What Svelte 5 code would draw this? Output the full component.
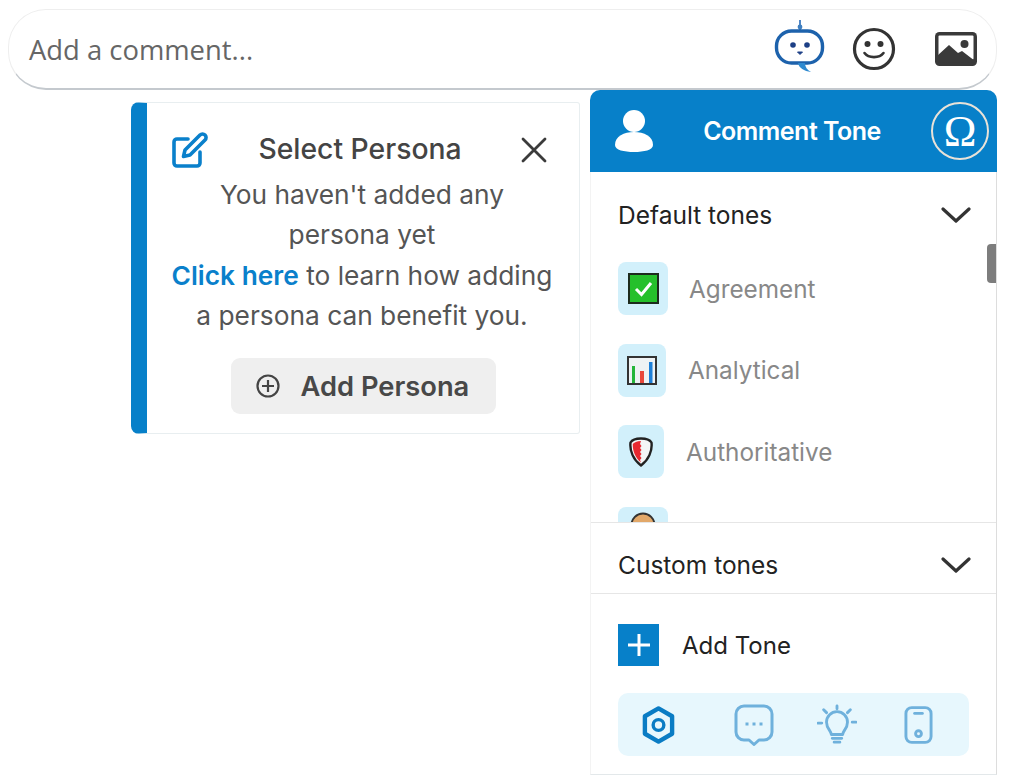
<script>
	const tones = [
		{ label: 'Agreement', icon: 'check', tile: 50, gap: 21 },
		{ label: 'Analytical', icon: 'chart', tile: 48, gap: 22 },
		{ label: 'Authoritative', icon: 'shield', tile: 46, gap: 22 }
	];
</script>

<div class="page">
	<div class="comment-bar">
		<span class="placeholder">Add a comment...</span>
		<div class="bar-icons">
			<svg class="bot" width="52" height="58" viewBox="0 0 52 58" fill="none">
				<path d="M26 2v11" stroke="#4f86c6" stroke-width="2" />
				<circle cx="26" cy="9" r="2.4" fill="#3f7fc0" />
				<rect x="2.5" y="13" width="46" height="32" rx="15" fill="#fff" stroke="#1d62ac" stroke-width="3.4" />
				<circle cx="19" cy="27" r="2.8" fill="#1c3f86" />
				<circle cx="33" cy="27" r="2.8" fill="#1c3f86" />
				<path d="M23.5 34h5l-2.500 2.500z" fill="#1c3f86" stroke="#1c3f86" />
				<path d="M24 45c1 5 6 8 13 9-4-2-6-5-6-9" fill="#2f8ad0" />
			</svg>
			<svg class="smile" width="44" height="44" viewBox="0 0 44 44" fill="none">
				<circle cx="22" cy="22" r="19.500" stroke="#333" stroke-width="3.200" />
				<circle cx="15.500" cy="17" r="3" fill="#333" />
				<circle cx="28.500" cy="17" r="3" fill="#333" />
				<path d="M12.500 26c4 5.500 15 5.500 19 0" stroke="#333" stroke-width="2.600" stroke-linecap="round" />
			</svg>
			<svg class="picture" width="42" height="34" viewBox="0 0 42 34">
				<rect width="42" height="34" rx="4.500" fill="#3a3a3a" />
				<rect x="3.500" y="3.500" width="35" height="24" rx="1" fill="#fff" />
				<circle cx="29.500" cy="12" r="4" fill="#3a3a3a" />
				<path d="M2 30V24L14 13l9 8 4-2 13 10v2z" fill="#3a3a3a" />
			</svg>
		</div>
	</div>

	<div class="lower">
		<section class="persona">
			<div class="persona-body">
				<div class="persona-head">
					<svg width="38" height="38" viewBox="0 0 38 38" fill="none" stroke="#0a80cb" stroke-width="3.600" stroke-linecap="round" stroke-linejoin="round">
						<path d="M17 8H6a3 3 0 0 0-3 3v21a3 3 0 0 0 3 3h20a3 3 0 0 0 3-3V21" />
						<path d="M14 19 29 4a3.500 3.500 0 0 1 5 0 3.500 3.500 0 0 1 0 5L19 24l-6.500 1.500z" />
					</svg>
					<h2>Select Persona</h2>
					<svg width="26" height="26" viewBox="0 0 26 26" stroke="#3b3b3b" stroke-width="2.800" stroke-linecap="round">
						<path d="M2 2l22 22M24 2 2 24" />
					</svg>
				</div>
				<p>
					You haven't added any<br />persona yet<br />
					<a href="#help">Click here</a> to learn how adding<br />a persona can benefit you.
				</p>
				<button class="add-persona">
					<svg width="24" height="24" viewBox="0 0 24 24" fill="none" stroke="#444" stroke-width="2.200">
						<circle cx="12" cy="12" r="10.500" />
						<path d="M12 6v12M6 12h12" />
					</svg>
					<span>Add Persona</span>
				</button>
			</div>
		</section>

		<section class="tones">
			<header>
				<svg width="40" height="44" viewBox="0 0 40 44" fill="#fff">
					<circle cx="20" cy="12" r="11" />
					<path d="M1 36c0-9 9-13 19-13s19 4 19 13c0 5-9 7-19 7S1 41 1 36z" />
				</svg>
				<h3>Comment Tone</h3>
				<span class="omega">Ω</span>
			</header>

			<div class="group-scroll">
				<div class="group-head first">
					<span>Default tones</span>
					<svg width="30" height="16" viewBox="0 0 30 16" fill="none" stroke="#333" stroke-width="3.200" stroke-linecap="round" stroke-linejoin="round">
						<path d="M2 2l13 12L28 2" />
					</svg>
				</div>
				<div class="thumb"></div>
				<ul>
					{#each tones as tone}
						<li style="gap: {tone.gap}px">
							<span class="tile" style="width: {tone.tile}px">
								{#if tone.icon === 'check'}
									<svg width="31" height="31" viewBox="0 0 31 31">
										<rect x="1" y="1" width="29" height="29" fill="#25c02b" stroke="#1d2b1d" stroke-width="2" />
										<path d="M8 16l5.500 5.500L23 10" fill="none" stroke="#fff" stroke-width="3" />
									</svg>
								{:else if tone.icon === 'chart'}
									<svg width="30" height="29" viewBox="0 0 30 29">
										<rect x="1" y="1" width="28" height="27" fill="#eef2f4" stroke="#333" stroke-width="2" />
										<rect x="5" y="10" width="3" height="17" fill="#25b53a" />
										<rect x="13" y="15" width="4" height="12" fill="#e8483c" />
										<rect x="22" y="6" width="3.500" height="21" fill="#1e80d8" />
									</svg>
								{:else}
									<svg width="24" height="30" viewBox="0 0 24 30">
										<path d="M12 1.500C16 1.500 21 3 22.500 5.500 23.500 14 19.500 23 12 28.500 4.500 23 .5 14 1.500 5.500 3 3 8 1.500 12 1.500z" fill="#f4f6f7" stroke="#222" stroke-width="2.400" stroke-linejoin="round" />
										<path d="M12 4C8 4 5 5.500 3.800 7 3.500 14 6.500 21 12 25.500L11 23l1.500-2-1.500-2 1.500-2-1.500-2 1.500-2-1.500-2 1.500-2-1.500-2z" fill="#e8282f" />
									</svg>
								{/if}
							</span>
							<span class="tone-label">{tone.label}</span>
						</li>
					{/each}
					<li class="clipped">
						<span class="tile">
							<svg width="26" height="16" viewBox="0 0 26 16">
								<circle cx="13" cy="13" r="11.500" fill="#e2a869" stroke="#333" stroke-width="2" />
							</svg>
						</span>
					</li>
				</ul>
			</div>

			<div class="group-head custom">
				<span>Custom tones</span>
				<svg width="30" height="16" viewBox="0 0 30 16" fill="none" stroke="#333" stroke-width="3.200" stroke-linecap="round" stroke-linejoin="round">
					<path d="M2 2l13 12L28 2" />
				</svg>
			</div>

			<div class="add-tone">
				<span class="plus">
					<svg width="22" height="22" viewBox="0 0 22 22" stroke="#fff" stroke-width="3">
						<path d="M11 0v22M0 11h22" />
					</svg>
				</span>
				<span>Add Tone</span>
			</div>

			<nav class="tabs">
				<svg width="35" height="40" viewBox="0 0 36 40" fill="none" stroke="#0a7cc4">
					<path d="M18 3 32 11v18L18 37 4 29V11z" stroke-width="4.500" stroke-linejoin="round" />
					<circle cx="18" cy="20" r="5.500" stroke-width="3.500" />
				</svg>
				<svg width="40" height="42" viewBox="0 0 40 42" fill="none" stroke="#6fb1dc" stroke-width="3" stroke-linejoin="round">
					<path d="M10 2h20a8 8 0 0 1 8 8v18a8 8 0 0 1-8 8h-5l-5 4.500-5-4.500h-5a8 8 0 0 1-8-8V10a8 8 0 0 1 8-8z" />
					<path d="M11.500 20h3M18.500 20h3M25.500 20h3" stroke-width="3.200" />
				</svg>
				<svg width="40" height="42" viewBox="0 0 42 42" fill="none" stroke="#6fb1dc" stroke-width="3" stroke-linecap="round">
					<path d="M15 31c0-4-5-6-5-13a11 11 0 0 1 22 0c0 7-5 9-5 13z" stroke-linejoin="round" />
					<path d="M16 35h10M18 39h6M21 1v3M7 5l3 3M35 5l-3 3M1 19h4M37 18h4" />
				</svg>
				<svg width="29" height="40" viewBox="0 0 30 40" fill="none" stroke="#6fb1dc" stroke-width="3">
					<rect x="2" y="2" width="26" height="36" rx="6" />
					<path d="M11 8h8" stroke-linecap="round" />
					<circle cx="15" cy="29" r="3" />
				</svg>
			</nav>
		</section>
	</div>
</div>

<style>
	:global(body) {
		background: #fff;
	}

	.page {
		width: 1024px;
		height: 781px;
		box-sizing: border-box;
		padding: 9px 27px 0 8px;
		overflow: hidden;
		font-family: Inter, "Liberation Sans", sans-serif;
	}

	.comment-bar {
		height: 81px;
		box-sizing: border-box;
		display: flex;
		align-items: center;
		justify-content: space-between;
		padding: 0 19px 0 20px;
		background: #fff;
		border: 1px solid #eee;
		border-bottom: 2px solid #c4c9ce;
		border-radius: 38px;
	}

	.placeholder {
		font-family: "Open Sans", sans-serif;
		font-size: 27.400px;
		color: #666;
	}

	.bar-icons {
		display: flex;
		align-items: center;
	}

	.bot {
		margin: -4px 26px 0 0;
	}

	.smile {
		margin-right: 39px;
	}

	.lower {
		display: flex;
		align-items: flex-start;
		gap: 10px;
		margin-left: 123px;
	}

	.persona {
		width: 449px;
		height: 332px;
		box-sizing: border-box;
		margin-top: 12px;
		border: 1px solid #e8eef0;
		border-left: 16px solid #0780c9;
		border-radius: 8px 3px 3px 8px;
	}

	.persona-body {
		display: flex;
		flex-direction: column;
		align-items: center;
		padding: 28px 33px 0 24px;
		color: #555;
	}

	.persona-head {
		align-self: stretch;
		display: flex;
		align-items: center;
		justify-content: space-between;
		height: 38px;
	}

	.persona-head svg:last-child {
		margin-right: -1px;
	}

	h2 {
		margin: -2px 10px 0 0;
		font-size: 28.300px;
		font-weight: 500;
		color: #444;
	}

	p {
		margin: 6px -8px 0 -1px;
		font-size: 26.300px;
		line-height: 40.300px;
		text-align: center;
		white-space: nowrap;
	}

	a {
		color: #0a80cb;
		font-weight: 600;
		text-decoration: none;
	}

	.add-persona {
		display: flex;
		align-items: center;
		gap: 21px;
		width: 265px;
		height: 56px;
		margin: 22px 0 0 9px;
		padding: 0 0 0 25px;
		border: 0;
		border-radius: 9px;
		background: #efefef;
		font-family: inherit;
		font-size: 27.300px;
		font-weight: 600;
		color: #484848;
	}

	.tones {
		width: 407px;
		height: 685px;
		box-sizing: border-box;
		display: flex;
		flex-direction: column;
		border-right: 1px solid #ddd;
		border-bottom: 1px solid #e3e8ea;
		border-left: 1px solid #f3f3f3;
		border-radius: 10px 10px 0 0;
		background: #fff;
	}

	header {
		flex: none;
		height: 82px;
		margin: 0 -1px 0 -1px;
		display: flex;
		align-items: center;
		padding: 0 8px 0 24px;
		background: #0780c9;
		border-radius: 10px 10px 0 0;
		color: #fff;
	}

	h3 {
		flex: 1;
		margin: 0 0 0 8px;
		text-align: center;
		font-size: 25px;
		font-weight: 600;
		letter-spacing: -0.5px;
	}

	.omega {
		width: 58px;
		height: 58px;
		box-sizing: border-box;
		margin-left: 9px;
		display: flex;
		align-items: center;
		justify-content: center;
		border: 2.500px solid #e9e2d8;
		border-radius: 50%;
		font-family: "Liberation Serif", serif;
		font-size: 44px;
	}

	.group-scroll {
		position: relative;
		height: 350px;
		overflow: hidden;
		flex: none;
		border-bottom: 1px solid #e6e6e6;
	}

	.group-head {
		display: flex;
		align-items: center;
		justify-content: space-between;
		padding: 0 25px 0 27px;
		font-size: 24.500px;
		color: #222;
	}

	.group-head.first {
		height: 86px;
	}

	.group-head.custom {
		flex: none;
		height: 71px;
		padding-top: 14px;
		box-sizing: border-box;
		border-bottom: 1px solid #e6e6e6;
	}

	.thumb {
		position: absolute;
		top: 72px;
		right: 0;
		width: 9px;
		height: 39px;
		border-radius: 4px 0 0 4px;
		background: #7d7d7d;
	}

	ul {
		margin: 4px 0 0;
		padding: 0 0 0 27px;
		list-style: none;
		display: flex;
		flex-direction: column;
		gap: 28.500px;
	}

	li {
		display: flex;
		align-items: center;
	}

	.tile {
		height: 53px;
		width: 50px;
		flex: none;
		display: flex;
		align-items: center;
		justify-content: center;
		border-radius: 8px;
		background: #d2f0fb;
	}

	.clipped .tile {
		align-items: flex-start;
		padding-top: 5px;
		box-sizing: border-box;
	}

	.tone-label {
		font-size: 24.300px;
		color: #888;
	}

	.add-tone {
		flex: none;
		display: flex;
		align-items: center;
		gap: 23px;
		margin: 30px 0 0 27px;
		font-size: 24px;
		color: #222;
	}

	.plus {
		width: 41px;
		height: 42px;
		display: flex;
		align-items: center;
		justify-content: center;
		background: #0780c9;
	}

	.tabs {
		flex: none;
		height: 63px;
		box-sizing: border-box;
		margin: 27px 27px 0;
		padding-left: 23px;
		display: flex;
		align-items: center;
		background: #e7f7fd;
		border-radius: 10px;
	}

	.tabs svg:nth-child(2) {
		margin-left: 58px;
	}

	.tabs svg:nth-child(3) {
		margin-left: 43px;
	}

	.tabs svg:nth-child(4) {
		margin-left: 47px;
	}
</style>
